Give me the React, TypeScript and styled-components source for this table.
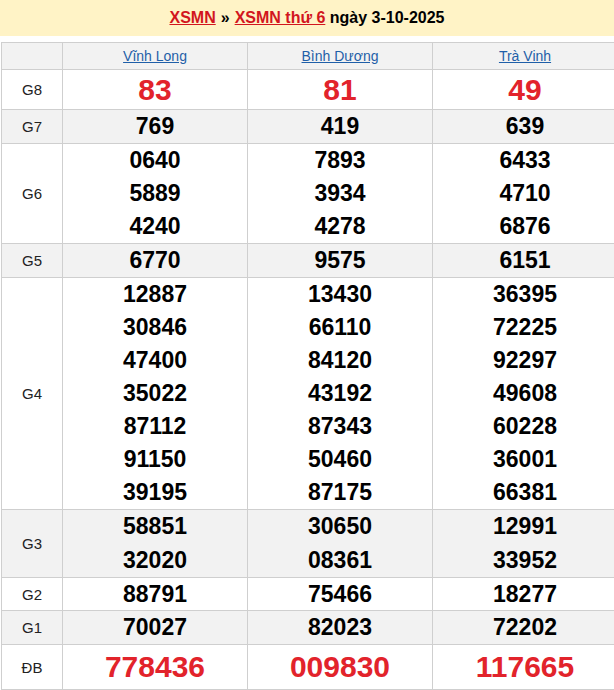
import React from "react";
import styled, { createGlobalStyle } from "styled-components";

const Global = createGlobalStyle`
  html, body { margin: 0; padding: 0; overflow: hidden; background: #fff; }
  body { font-family: Arial, "Liberation Sans", sans-serif; }
`;

const Page = styled.div`
  width: 614px;
`;

const TitleBar = styled.div`
  height: 36px;
  background: #fff3c6;
  display: flex;
  align-items: center;
  justify-content: center;
  font-size: 16px;
  font-weight: bold;
  color: #000;
  margin-bottom: 6px;
`;

const TitleLink = styled.a`
  color: #d2161e;
  text-decoration: underline;
`;

const Sep = styled.span`
  margin: 0 5px;
`;

const Table = styled.table`
  border-collapse: collapse;
  margin-left: 1px;
  width: 616px;
  table-layout: fixed;
`;

const Col = styled.col<{ $w: number }>`
  width: ${(p) => p.$w}px;
`;

const Row = styled.tr<{ $alt?: boolean }>`
  background: ${(p) => (p.$alt ? "#f2f2f2" : "#fff")};
`;

const HeadCell = styled.th`
  border: 1px solid #cfcfcf;
  padding: 0;
  height: 26px;
  font-size: 14px;
  font-weight: normal;
  text-align: center;
  vertical-align: middle;
`;

const ProvLink = styled.a`
  color: #1f5fa8;
  text-decoration: underline;
`;

const LabelCell = styled.td`
  border: 1px solid #cfcfcf;
  padding: 0;
  font-size: 15px;
  color: #222;
  text-align: center;
  vertical-align: middle;
`;

const PrizeCell = styled.td`
  border: 1px solid #cfcfcf;
  padding: 0;
  text-align: center;
  vertical-align: middle;
`;

const Num = styled.div<{ $big?: boolean; $h: number }>`
  font-size: ${(p) => (p.$big ? 30 : 23)}px;
  line-height: ${(p) => p.$h}px;
  font-weight: bold;
  color: ${(p) => (p.$big ? "#e2232b" : "#000")};
`;

type Prize = { label: string; h: number; big?: boolean; vals: string[][] };

const prizes: Prize[] = [
  { label: "G8", h: 39, big: true, vals: [["83"], ["81"], ["49"]] },
  { label: "G7", h: 33, vals: [["769"], ["419"], ["639"]] },
  {
    label: "G6",
    h: 33,
    vals: [
      ["0640", "5889", "4240"],
      ["7893", "3934", "4278"],
      ["6433", "4710", "6876"],
    ],
  },
  { label: "G5", h: 33, vals: [["6770"], ["9575"], ["6151"]] },
  {
    label: "G4",
    h: 33,
    vals: [
      ["12887", "30846", "47400", "35022", "87112", "91150", "39195"],
      ["13430", "66110", "84120", "43192", "87343", "50460", "87175"],
      ["36395", "72225", "92297", "49608", "60228", "36001", "66381"],
    ],
  },
  {
    label: "G3",
    h: 33.5,
    vals: [
      ["58851", "32020"],
      ["30650", "08361"],
      ["12991", "33952"],
    ],
  },
  { label: "G2", h: 32, vals: [["88791"], ["75466"], ["18277"]] },
  { label: "G1", h: 33, vals: [["70027"], ["82023"], ["72202"]] },
  { label: "ĐB", h: 44, big: true, vals: [["778436"], ["009830"], ["117665"]] },
];

const provinces = ["Vĩnh Long", "Bình Dương", "Trà Vinh"];

export default function App() {
  return (
    <Page>
      <Global />
      <TitleBar>
        <TitleLink href="#">XSMN</TitleLink>
        <Sep>»</Sep>
        <TitleLink href="#">XSMN thứ 6</TitleLink>
        <span>&nbsp;ngày 3-10-2025</span>
      </TitleBar>
      <Table>
        <colgroup>
          <Col $w={61} />
          <Col $w={185} />
          <Col $w={185} />
          <Col $w={185} />
        </colgroup>
        <thead>
          <Row $alt>
            <HeadCell />
            {provinces.map((p) => (
              <HeadCell key={p}>
                <ProvLink href="#">{p}</ProvLink>
              </HeadCell>
            ))}
          </Row>
        </thead>
        <tbody>
          {prizes.map((pr, i) => (
            <Row key={pr.label} $alt={i % 2 === 1}>
              <LabelCell>{pr.label}</LabelCell>
              {pr.vals.map((col, j) => (
                <PrizeCell key={j}>
                  {col.map((v, k) => (
                    <Num key={k} $big={pr.big} $h={pr.h}>
                      {v}
                    </Num>
                  ))}
                </PrizeCell>
              ))}
            </Row>
          ))}
        </tbody>
      </Table>
    </Page>
  );
}
